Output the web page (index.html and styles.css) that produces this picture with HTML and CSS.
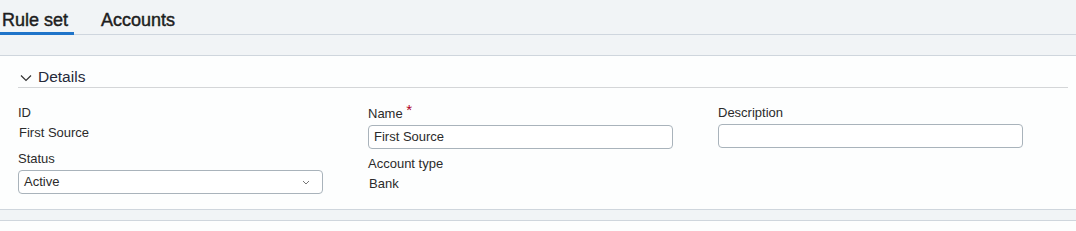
FILE: index.html
```html
<!DOCTYPE html>
<html lang="en">
  <head>
    <meta charset="UTF-8" />
    <title>Rule set</title>
    <link rel="stylesheet" href="styles.css">
  </head>
  <body>
    <nav class="tabs">
      <a class="tab active">Rule set</a>
      <a class="tab">Accounts</a>
    </nav>
    <div class="band"></div>

    <section class="panel">
      <div class="panel-header">
        <svg class="chevron" width="12" height="8" viewBox="0 0 12 8">
          <path d="M1 1.5 L6 6.5 L11 1.5" fill="none" stroke="#333" stroke-width="1.2" />
        </svg>
        <span>Details</span>
      </div>

      <div class="fields">
        <div class="col first">
          <div class="field">
            <label>ID</label>
            <div class="value">First Source</div>
          </div>
          <div class="field">
            <label>Status</label>
            <div class="select">
              <span>Active</span>
              <svg width="8" height="5" viewBox="0 0 8 5">
                <path d="M1 1 L4 4 L7 1" fill="none" stroke="#777" stroke-width="1" />
              </svg>
            </div>
          </div>
        </div>
        <div class="col">
          <div class="field">
            <label>Name <span class="req">*</span></label>
            <div class="input">First Source</div>
          </div>
          <div class="field">
            <label>Account type</label>
            <div class="value">Bank</div>
          </div>
        </div>
        <div class="col">
          <div class="field">
            <label>Description</label>
            <div class="input"></div>
          </div>
        </div>
      </div>
    </section>
    <div class="band bottom"></div>
  </body>
</html>
```

FILE: styles.css
```css
/* Reset */
* {
  margin: 0;
  padding: 0;
  box-sizing: border-box;
  font-family: "Liberation Sans", Arial, sans-serif;
}

body {
  background-color: #fdfefe;
  color: #2b2b2b;
}

/* Tabs */
.tabs {
  display: flex;
  gap: 25px;
  height: 35px;
  background-color: #f1f4f6;
  border-bottom: 1px solid #cfd6de;
}

.tab {
  font-size: 18px;
  color: #1e1e1e;
  -webkit-text-stroke: 0.45px #1e1e1e;
  padding: 10px 6px 0 2px;
  height: 35px;
  border-bottom: 3px solid transparent;
}

.tab.active {
  border-bottom-color: #1f74c9;
}

.band {
  height: 21px;
  background-color: #f1f4f6;
  border-bottom: 1px solid #cfd6dd;
}

.band.bottom {
  height: 12px;
  border-top: 1px solid #cfd6dd;
}

/* Panel */
.panel {
  padding: 10px 8px 15px 18px;
}

.panel-header {
  display: flex;
  align-items: center;
  gap: 6px;
  height: 22px;
  border-bottom: 1px solid #d4d6d8;
  font-size: 15.5px;
  color: #262a3a;
  padding-left: 2px;
}

.chevron {
  margin-top: 2px;
}

.fields {
  display: flex;
  gap: 45px;
  padding-top: 17px;
}

.col {
  width: 305px;
  display: flex;
  flex-direction: column;
  gap: 7px;
}

.col.first {
  gap: 10px;
}

.field label {
  display: block;
  font-size: 13px;
  color: #2b2b2b;
  line-height: 16px;
  margin-bottom: 3px;
}

.req {
  color: #b0001e;
  font-size: 15px;
  position: relative;
  top: -3px;
}

.value {
  font-size: 13px;
  line-height: 16px;
  padding: 1px 0 0 1px;
}

.input,
.select {
  height: 24px;
  border: 1px solid #a9b3bb;
  border-radius: 4px;
  background-color: #fff;
  font-size: 13px;
  line-height: 22px;
  padding: 0 5px;
}

.select {
  display: flex;
  justify-content: space-between;
  align-items: center;
  padding-right: 12px;
}
```
